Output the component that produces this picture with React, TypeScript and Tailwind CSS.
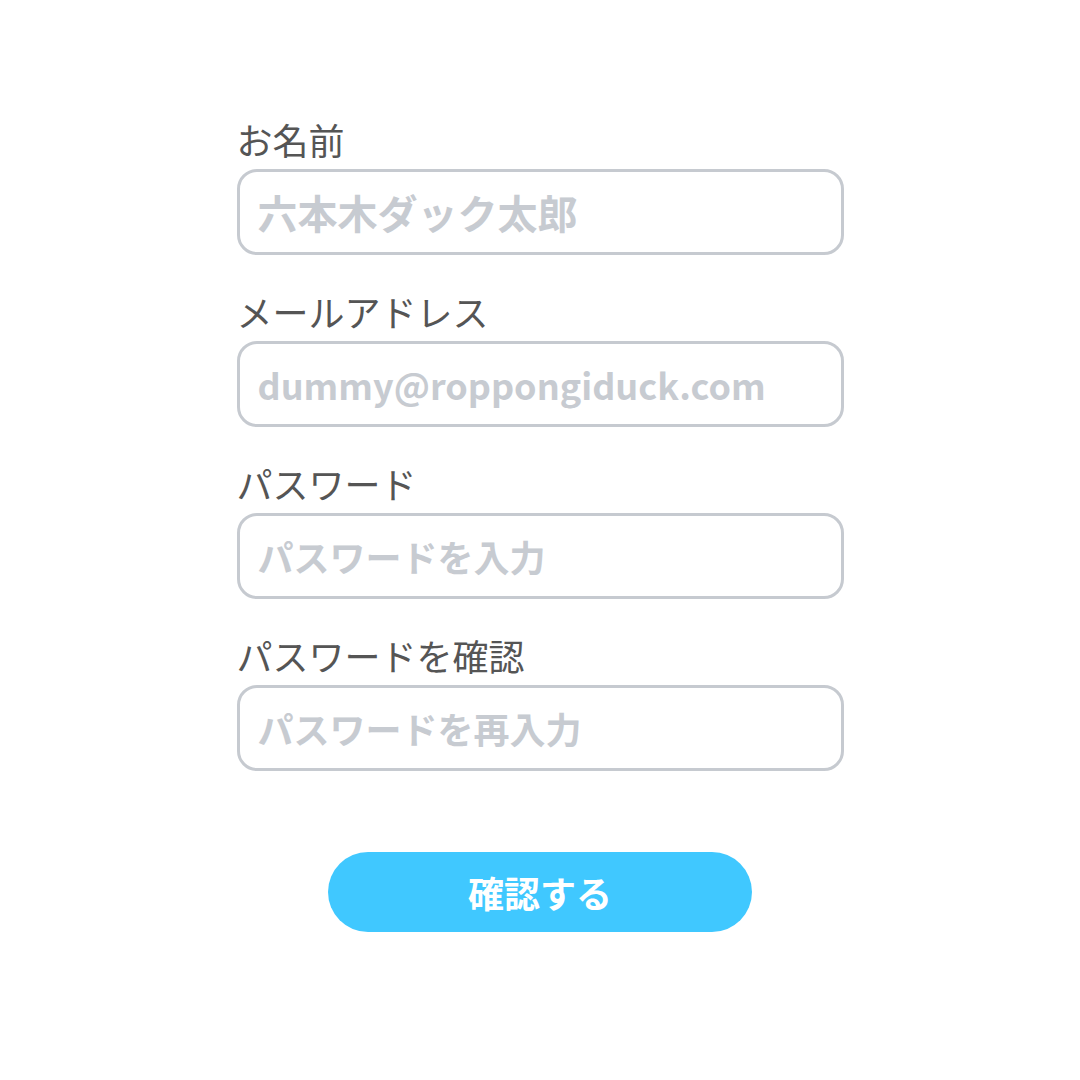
import React from "react";

const font = { fontFamily: '"Noto Sans CJK JP", "Noto Sans", sans-serif' };

function Field({ label, placeholder, size }: { label: string; placeholder: string; size: string }) {
  return (
    <div className="flex flex-col">
      <label className="text-[36px] leading-[44px] text-[#555555]">{label}</label>
      <div className="mt-[8px] h-[86px] rounded-[20px] border-[3px] border-[#c6cad0] bg-white flex items-center pl-[18px]">
        <span className={`${size} font-bold text-[#c7cbd1] leading-none`}>{placeholder}</span>
      </div>
    </div>
  );
}

export default function App() {
  return (
    <div className="min-h-[1080px] w-[1080px] bg-white" style={font}>
      <div className="mx-auto w-[607px] pt-[117px] flex flex-col gap-[34px]">
        <Field label="お名前" placeholder="六本木ダック太郎" size="text-[40px]" />
        <Field label="メールアドレス" placeholder="dummy@roppongiduck.com" size="text-[36px]" />
        <Field label="パスワード" placeholder="パスワードを入力" size="text-[36px]" />
        <Field label="パスワードを確認" placeholder="パスワードを再入力" size="text-[36px]" />
      </div>
      <div className="flex justify-center mt-[81px]">
        <button className="w-[424px] h-[80px] rounded-full bg-[#40c8ff] text-white text-[36px] font-bold">
          確認する
        </button>
      </div>
    </div>
  );
}
